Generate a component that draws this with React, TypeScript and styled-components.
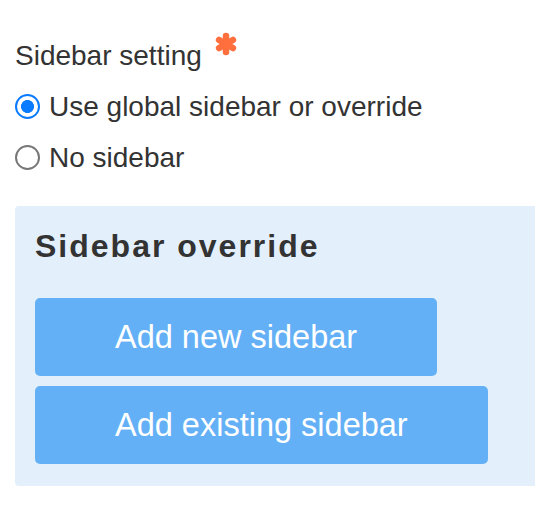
import React, { useState } from 'react';
import styled, { createGlobalStyle } from 'styled-components';

const GlobalStyle = createGlobalStyle`
  body {
    margin: 0;
    background: #ffffff;
    font-family: "Liberation Sans", Arial, Helvetica, sans-serif;
    color: #333333;
  }
`;

const Page = styled.div`
  padding: 40px 0 20px 15px;
`;

const FieldLabel = styled.div`
  display: flex;
  align-items: flex-start;
  font-size: 28px;
  line-height: 32px;
`;

const Required = styled.svg`
  margin-left: 12px;
  margin-top: -8px;
`;

const RadioRow = styled.label`
  display: flex;
  align-items: center;
  gap: 9px;
  margin-top: 19px;
  font-size: 28px;
  line-height: 32px;
  cursor: pointer;
`;

const RadioInput = styled.input`
  appearance: none;
  margin: 0;
  width: 25px;
  height: 25px;
  border-radius: 50%;
  border: 2px solid #777777;
  background: #ffffff;
  box-sizing: border-box;
  flex-shrink: 0;
  position: relative;
  top: -1px;

  &:checked {
    border: 2.5px solid #0a7aff;
    background: radial-gradient(circle, #0a7aff 0 6.2px, #ffffff 6.8px);
  }
`;

const OverridePanel = styled.section`
  margin-top: 32px;
  background: #e3f0fc;
  border-radius: 4px 0 0 4px;
  padding: 22px 20px;
`;

const PanelTitle = styled.h3`
  margin: 0 0 33px;
  font-size: 32px;
  font-weight: 700;
  letter-spacing: 2px;
  color: #333333;
`;

const ButtonStack = styled.div`
  display: flex;
  flex-direction: column;
  align-items: flex-start;
  gap: 10px;
`;

const ActionButton = styled.button`
  height: 78px;
  padding: 0 80px;
  border: none;
  border-radius: 5px;
  background: #63b0f6;
  color: #ffffff;
  font-family: "Liberation Sans", Arial, Helvetica, sans-serif;
  font-size: 32.5px;
  cursor: pointer;
`;

const options = [
  { value: 'global', label: 'Use global sidebar or override' },
  { value: 'none', label: 'No sidebar' },
];

export default function App() {
  const [setting, setSetting] = useState('global');

  return (
    <>
      <GlobalStyle />
      <Page>
        <FieldLabel>
          Sidebar setting
          <Required width="24" height="24" viewBox="0 0 24 24" aria-label="required">
            <g stroke="#ff6f3d" strokeWidth="6.5" strokeLinecap="round">
              <line x1="12" y1="4" x2="12" y2="20" />
              <line x1="5.1" y1="8" x2="18.9" y2="16" />
              <line x1="5.1" y1="16" x2="18.9" y2="8" />
            </g>
          </Required>
        </FieldLabel>

        {options.map((o) => (
          <RadioRow key={o.value}>
            <RadioInput
              type="radio"
              name="sidebar-setting"
              value={o.value}
              checked={setting === o.value}
              onChange={() => setSetting(o.value)}
            />
            {o.label}
          </RadioRow>
        ))}

        <OverridePanel>
          <PanelTitle>Sidebar override</PanelTitle>
          <ButtonStack>
            <ActionButton>Add new sidebar</ActionButton>
            <ActionButton>Add existing sidebar</ActionButton>
          </ButtonStack>
        </OverridePanel>
      </Page>
    </>
  );
}
